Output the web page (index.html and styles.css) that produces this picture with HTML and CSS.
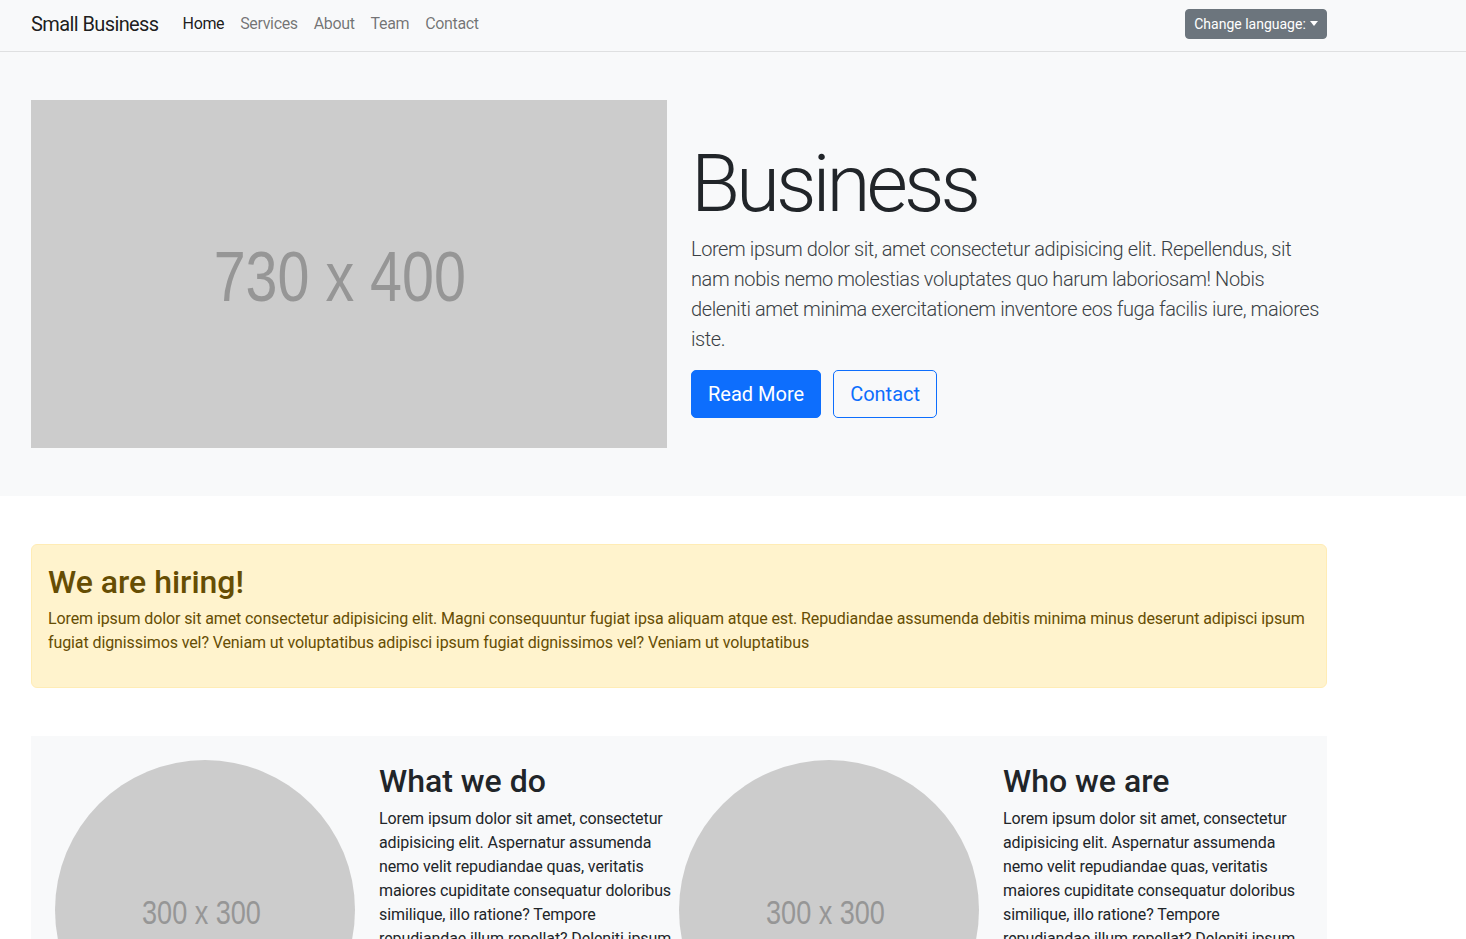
FILE: index.html
```html
<!DOCTYPE html>
<html lang="en">
<head>
<meta charset="utf-8">
<title>Small Business</title>
<link rel="stylesheet" href="styles.css">
</head>
<body>
<nav class="navbar">
  <div class="container nav-inner">
    <a class="brand" href="#">Small Business</a>
    <ul class="nav-links">
      <li><a class="nav-link active" href="#">Home</a></li>
      <li><a class="nav-link" href="#">Services</a></li>
      <li><a class="nav-link" href="#">About</a></li>
      <li><a class="nav-link" href="#">Team</a></li>
      <li><a class="nav-link" href="#">Contact</a></li>
    </ul>
    <button class="lang-btn" type="button">Change language:<span class="caret"></span></button>
  </div>
</nav>

<header class="hero">
  <div class="container hero-row">
    <div class="hero-img"><span>730 x 400</span></div>
    <div class="hero-text">
      <h1 class="display">Business</h1>
      <p class="lead">Lorem ipsum dolor sit, amet consectetur adipisicing elit. Repellendus, sit nam nobis nemo molestias voluptates quo harum laboriosam! Nobis deleniti amet minima exercitationem inventore eos fuga facilis iure, maiores iste.</p>
      <div class="hero-buttons">
        <a class="btn btn-primary" href="#">Read More</a>
        <a class="btn btn-outline" href="#">Contact</a>
      </div>
    </div>
  </div>
</header>

<main class="container">
  <section class="alert">
    <h2 class="alert-heading">We are hiring!</h2>
    <p>Lorem ipsum dolor sit amet consectetur adipisicing elit. Magni consequuntur fugiat ipsa aliquam atque est. Repudiandae assumenda debitis minima minus deserunt adipisci ipsum fugiat dignissimos vel? Veniam ut voluptatibus adipisci ipsum fugiat dignissimos vel? Veniam ut voluptatibus</p>
  </section>

  <section class="features">
    <div class="feature">
      <div class="circle"><span>300 x 300</span></div>
      <div class="feature-text">
        <h2>What we do</h2>
        <p>Lorem ipsum dolor sit amet, consectetur adipisicing elit. Aspernatur assumenda nemo velit repudiandae quas, veritatis maiores cupiditate consequatur doloribus similique, illo ratione? Tempore repudiandae illum repellat? Deleniti ipsum quibusdam eligendi.</p>
      </div>
    </div>
    <div class="feature">
      <div class="circle"><span>300 x 300</span></div>
      <div class="feature-text">
        <h2>Who we are</h2>
        <p>Lorem ipsum dolor sit amet, consectetur adipisicing elit. Aspernatur assumenda nemo velit repudiandae quas, veritatis maiores cupiditate consequatur doloribus similique, illo ratione? Tempore repudiandae illum repellat? Deleniti ipsum quibusdam eligendi.</p>
      </div>
    </div>
  </section>
</main>
</body>
</html>
```
FILE: styles.css
```css
* { box-sizing: border-box; }

html, body {
  margin: 0;
  padding: 0;
}

body {
  font-family: Roboto, "Liberation Sans", Arial, sans-serif;
  font-size: 16px;
  line-height: 1.5;
  letter-spacing: -0.1px;
  color: #212529;
  background: #fff;
}

a { text-decoration: none; }

.container {
  width: 1320px;
  margin-left: 19px;
  padding: 0 12px;
}

/* Navbar */
.navbar {
  background: #f8f9fa;
  border-bottom: 1px solid #dfe0e1;
  height: 52px;
}

.nav-inner {
  height: 48px;
  display: flex;
  align-items: center;
}

.brand {
  font-size: 20px;
  letter-spacing: -0.6px;
  color: rgba(0, 0, 0, 0.9);
  margin-right: 16px;
  line-height: 30px;
}

.nav-links {
  list-style: none;
  display: flex;
  margin: 0;
  padding: 0;
  flex: 1;
}

.nav-link {
  display: block;
  padding: 8px 8px;
  color: rgba(0, 0, 0, 0.55);
  font-size: 16px;
  letter-spacing: -0.35px;
}

.nav-link.active { color: rgba(0, 0, 0, 0.9); }

.lang-btn {
  font-family: inherit;
  font-size: 14px;
  line-height: 21px;
  letter-spacing: 0;
  color: #fff;
  background: #6c757d;
  border: 1px solid #6c757d;
  border-radius: 4px;
  padding: 3px 8px;
  height: 30px;
  width: 142px;
  display: flex;
  align-items: center;
  justify-content: center;
}

.caret {
  display: inline-block;
  margin-left: 4px;
  border-top: 5px solid #fff;
  border-left: 4px solid transparent;
  border-right: 4px solid transparent;
  margin-top: -2px;
}

/* Hero */
.hero {
  background: #f8f9fa;
  padding: 48px 0;
}

.hero-row {
  display: flex;
  align-items: center;
  gap: 24px;
}

.hero-img {
  width: 636px;
  height: 348px;
  flex: none;
  background: #cccccc;
  display: flex;
  align-items: center;
  justify-content: center;
  padding-right: 18px;
  padding-top: 6px;
}

.hero-img span,
.circle span {
  display: inline-block;
  font-family: "Liberation Sans", Arial, sans-serif;
  letter-spacing: 0;
  color: #969696;
  transform: scaleX(0.82);
  white-space: nowrap;
}

.hero-img span { font-size: 70px; }

.hero-text {
  width: 636px;
  flex: none;
}

.display {
  font-size: 80px;
  font-weight: 300;
  letter-spacing: -4px;
  line-height: 1.2;
  margin: 0 0 2px;
  padding-top: 6px;
  color: #212529;
}

.lead {
  font-size: 20px;
  font-weight: 300;
  letter-spacing: -0.4px;
  line-height: 30px;
  margin: 0 0 16px;
  color: #3a3f44;
}

.hero-buttons {
  display: flex;
  gap: 12px;
}

.btn {
  display: inline-block;
  font-size: 20px;
  line-height: 30px;
  letter-spacing: 0;
  padding: 8px 16px;
  border-radius: 5px;
  border: 1px solid #0d6efd;
}

.btn-primary {
  background: #0d6efd;
  color: #fff;
}

.btn-outline {
  background: transparent;
  color: #0d6efd;
}

/* Alert */
.alert {
  margin-top: 48px;
  background: #fff3cd;
  border: 1px solid #ffecb5;
  border-radius: 6px;
  padding: 16px;
  color: #664d03;
}

.alert-heading {
  font-size: 32px;
  font-weight: 500;
  line-height: 1.2;
  letter-spacing: 0;
  margin: 0 0 6px;
  padding-top: 2px;
}

.alert p {
  margin: 0 0 16px;
}

/* Features */
.features {
  margin-top: 48px;
  background: #f8f9fa;
  padding: 24px;
  display: flex;
}

.feature {
  display: flex;
  gap: 24px;
  width: 624px;
}

.circle {
  width: 300px;
  height: 300px;
  flex: none;
  border-radius: 50%;
  background: #cccccc;
  display: flex;
  align-items: center;
  justify-content: center;
  padding-right: 8px;
  padding-top: 4px;
}

.circle span { font-size: 33px; }

.feature-text {
  width: 300px;
  flex: none;
}

.feature-text h2 {
  font-size: 32px;
  font-weight: 500;
  line-height: 1.2;
  letter-spacing: 0;
  margin: 0 0 6px;
  padding-top: 2px;
}

.feature-text p {
  margin: 0 0 16px;
}
```
